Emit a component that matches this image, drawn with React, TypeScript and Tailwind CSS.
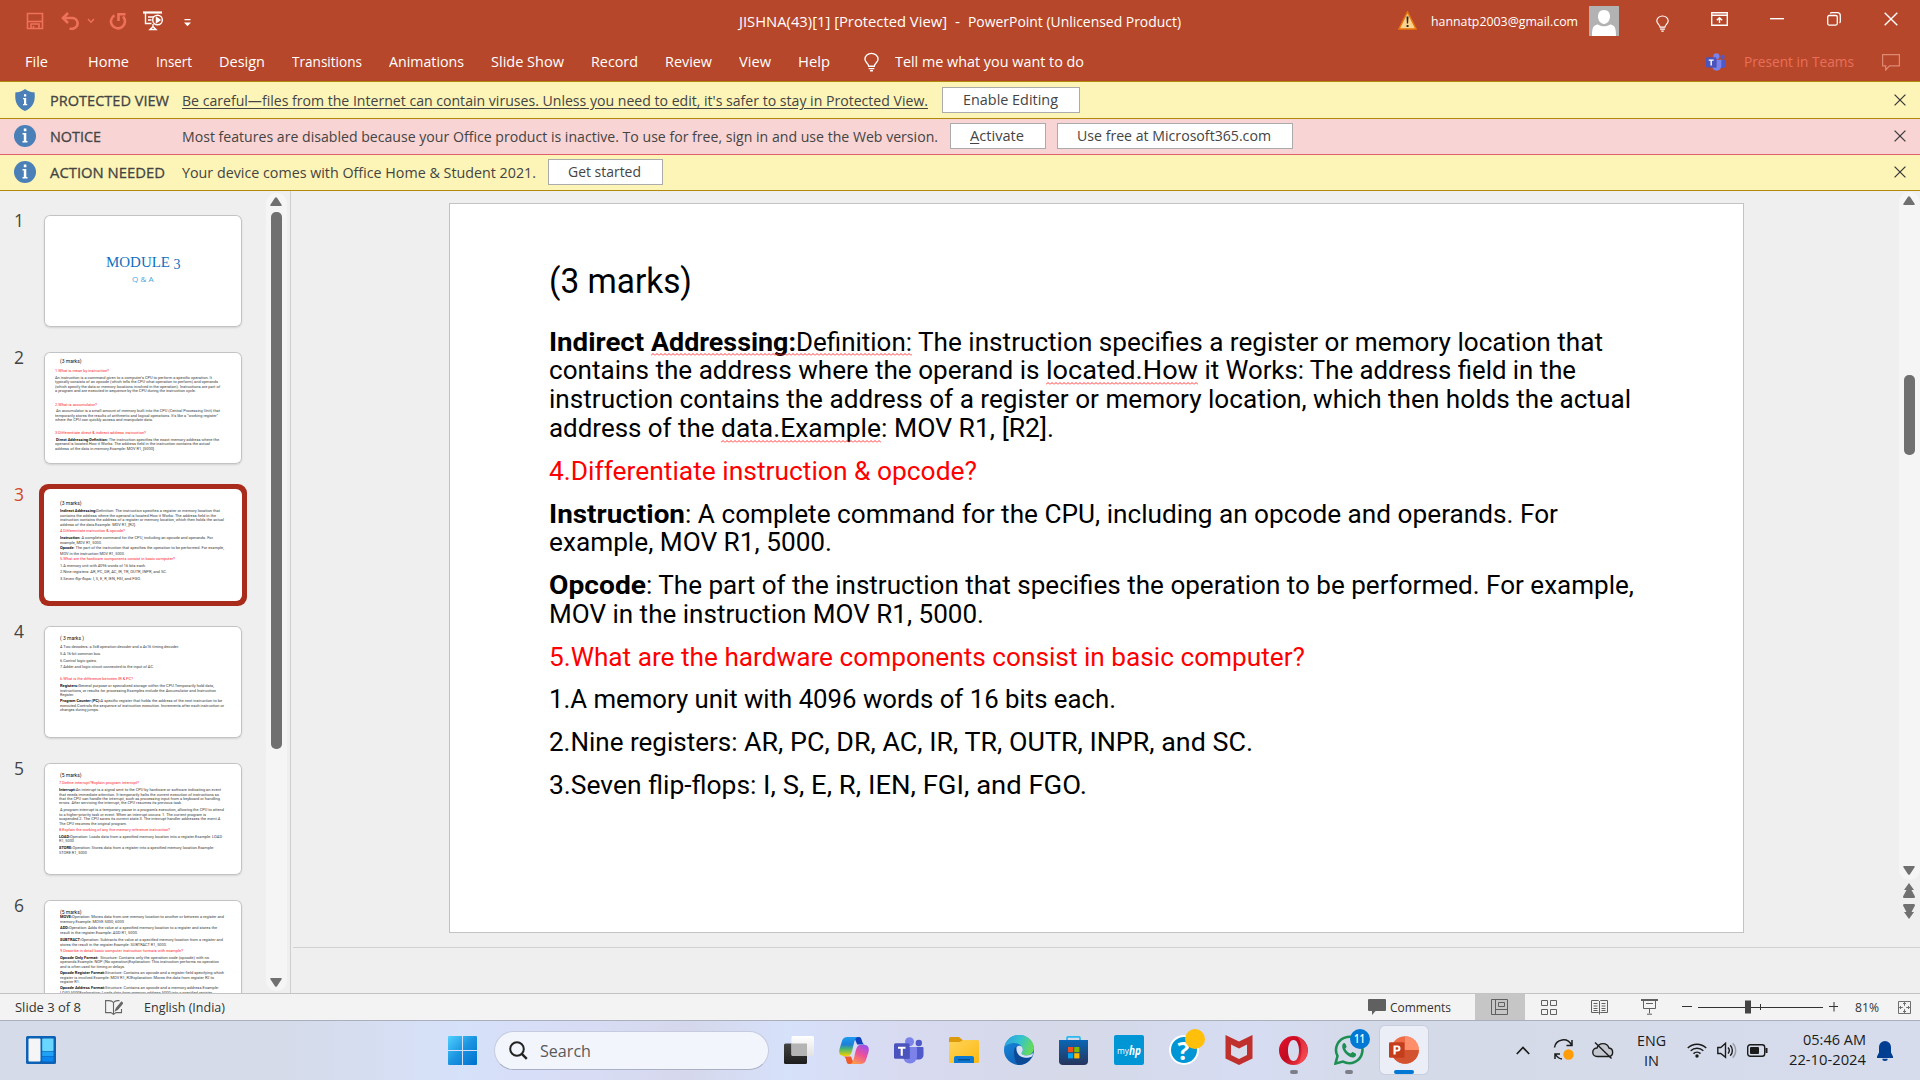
import React, { useLayoutEffect, useRef, useState } from "react";

/* Text set to an exact advance width, so that it keeps its place in its row. */
function Fit({ w, children, className = "" }: { w: number; children: React.ReactNode; className?: string }) {
  const ref = useRef<HTMLSpanElement>(null);
  const [scale, setScale] = useState(1);
  useLayoutEffect(() => {
    const el = ref.current;
    if (!el) return;
    const old = el.style.transform;
    el.style.transform = "none";
    const natural = el.getBoundingClientRect().width;
    el.style.transform = old;
    if (natural > 0) setScale(w / natural);
  }, [w, children]);
  return (
    <span className={"inline-block shrink-0 whitespace-pre " + className} style={{ width: w }}>
      <span ref={ref} className="inline-block origin-left whitespace-pre" style={{ transform: `scaleX(${scale})` }}>
        {children}
      </span>
    </span>
  );
}

/* ---------- title bar ---------- */

function QuickAccess() {
  return (
    <div className="flex h-[42px] items-center text-[#ee7159]">
      <svg className="ml-[26px]" width="18" height="18" viewBox="0 0 18 18" fill="none" stroke="currentColor" strokeWidth="1.6">
        <path d="M1.5 1.5h15v15h-15z" />
        <path d="M1.5 9.5h15" />
        <path d="M5 16.5v-4.5h8v4.5" />
        <path d="M7.5 14v2.5" />
      </svg>
      <svg className="ml-[16px]" width="20" height="18" viewBox="0 0 20 18" fill="none" stroke="currentColor" strokeWidth="2.6">
        <path d="M2.5 6h9a5.300 5.300 0 0 1 1.500 10.600l-3.500 0.400" />
        <path d="M8 1L3 6l5 5" />
      </svg>
      <svg className="ml-[7px]" width="8" height="6" viewBox="0 0 8 6" fill="none" stroke="currentColor" strokeWidth="1.4">
        <path d="M1 1l3 3.200L7 1" />
      </svg>
      <svg className="ml-[14px]" width="18" height="18" viewBox="0 0 18 18" fill="none" stroke="currentColor" strokeWidth="2.6">
        <path d="M5.500 3.300A7 7 0 1 0 14 4.500" />
        <path d="M9.500 9V2.300h7" />
      </svg>
      <svg className="ml-[15px] text-white" width="22" height="20" viewBox="0 0 22 20" fill="none" stroke="currentColor" strokeWidth="1.400">
        <path d="M1 1.500h19" strokeWidth="2.200" />
        <path d="M3.500 2v10.500h6M6 6h6M6 9h3.500" />
        <circle cx="15.500" cy="9" r="4.800" />
        <path d="M14.500 6.500v5l3.500-2.500z" fill="currentColor" />
        <path d="M11 13v2.500M8 18.500l3-3 3 3z" />
      </svg>
      <svg className="ml-[20px] mt-[3px] text-white" width="7" height="8" viewBox="0 0 7 8" fill="currentColor">
        <path d="M0.500 0h6v1.300h-6zM0 3.500h7L3.500 7.200z" />
      </svg>
    </div>
  );
}

function Bulb({ w, h }: { w: number; h: number }) {
  return (
    <svg width={w} height={h} viewBox="0 0 16 20" fill="none" stroke="#fff" strokeWidth="1.400">
      <path d="M5 14.500c0-3-4-4-4-7.500a7 6.300 0 0 1 14 0c0 3.500-4 4.500-4 7.500z" />
      <path d="M5 17h6M6.500 19.300h3" />
    </svg>
  );
}

function TitleBar() {
  return (
    <div className="flex h-[42px]">
      <div className="w-[739px]">
        <QuickAccess />
      </div>
      <div className="flex w-[663px] items-center pt-[2px] text-[14px] text-white">
        <Fit w={208}>JISHNA(43)[1] [Protected View]</Fit>
        <Fit w={5} className="ml-[8px]">-</Fit>
        <Fit w={213} className="ml-[8px]">PowerPoint (Unlicensed Product)</Fit>
      </div>
      <div className="flex h-[42px] items-start text-[13.500px] text-white">
        <svg className="-ml-[4px] mt-[11px]" width="19" height="19" viewBox="0 0 19 19">
          <path d="M9.500 1L18 18H1z" fill="#fcd38a" stroke="#e8760f" strokeWidth="1.500" />
          <path d="M8.500 5.500h2l-.4 7h-1.200zM8.600 14h1.900v2H8.600z" fill="#222" />
        </svg>
        <Fit w={147} className="ml-[14px] mt-[11px]">hannatp2003@gmail.com</Fit>
        <svg className="ml-[11px] mt-[6px]" width="30" height="30" viewBox="0 0 30 30">
          <rect width="30" height="30" fill="#b2b2b2" />
          <path d="M15 4c4 0 6 2.800 6 6.500S18.500 18 15 18s-6-3.800-6-7.500S11 4 15 4zM3 30c0-8 1-11 6-11.500 1.500 1 3.500 1.800 6 1.800s4.500-.8 6-1.800c5 .5 6 3.500 6 11.500z" fill="#fff" />
        </svg>
        <div className="ml-[37px] mt-[15px]"><Bulb w={13} h={17} /></div>
        <svg className="ml-[42px] mt-[12px]" width="17" height="14" viewBox="0 0 17 14" fill="none" stroke="#fff" strokeWidth="1.400">
          <path d="M.7.700h15.600v12.600H.7zM.7 3.300h15.600M8.500 11V6M5.800 8.300l2.700-2.600 2.700 2.600" />
        </svg>
        <svg className="ml-[42px] mt-[18px]" width="14" height="2" viewBox="0 0 14 2"><path d="M0 0h14v1.400H0z" fill="#fff" /></svg>
        <svg className="ml-[43px] mt-[12px]" width="14" height="14" viewBox="0 0 14 14" fill="none" stroke="#fff" strokeWidth="1.300">
          <rect x=".7" y="3.500" width="9.600" height="9.600" rx="1.500" />
          <path d="M3.300 1.500q.3-.8 1.500-.8h5.500q3 0 3 3v5.500q0 1.300-.8 1.600" />
        </svg>
        <svg className="ml-[43px] mt-[12px]" width="14" height="14" viewBox="0 0 14 14" stroke="#fff" strokeWidth="1.400"><path d="M.7.700l12.600 12.600M13.300.7L.7 13.300" /></svg>
      </div>
    </div>
  );
}

function TeamsIcon({ w, h }: { w: number; h: number }) {
  return (
    <svg width={w} height={h} viewBox="0 0 30 27">
      <circle cx="24.800" cy="6" r="3.200" fill="#5059c9" />
      <path d="M21 10h7.500q1 0 1 1v7a4.500 4.500 0 0 1-4.500 4.500h-4z" fill="#5059c9" />
      <circle cx="15.500" cy="4.700" r="4.500" fill="#7b83eb" />
      <path d="M9.500 10h12.500q1 0 1 1v8.500a7 7 0 0 1-14 0z" fill="#7b83eb" />
      <path d="M10 10h6v12h-6z" fill="#3f479e" opacity=".5" />
      <rect x="0" y="6.200" width="15.500" height="15.500" rx="1.500" fill="#4b53bc" />
      <path d="M4 9.800h7.500v2H8.800v7H6.700v-7H4z" fill="#fff" />
    </svg>
  );
}

const tabs: [string, string, number][] = [
  ["File", "ml-[25px]", 23],
  ["Home", "ml-[40px]", 41],
  ["Insert", "ml-[27px]", 36],
  ["Design", "ml-[27px]", 46],
  ["Transitions", "ml-[27px]", 70],
  ["Animations", "ml-[27px]", 75],
  ["Slide Show", "ml-[27px]", 73],
  ["Record", "ml-[27px]", 47],
  ["Review", "ml-[27px]", 47],
  ["View", "ml-[27px]", 32],
  ["Help", "ml-[27px]", 32],
];

function TabRow() {
  return (
    <div className="flex h-[39px] items-center text-[14.500px] text-white">
      {tabs.map(([t, m, w]) => (
        <Fit key={t} w={w} className={m}>{t}</Fit>
      ))}
      <div className="ml-[34px] pt-[1px]"><Bulb w={15} h={20} /></div>
      <Fit w={189} className="ml-[16px]">Tell me what you want to do</Fit>
      <div className="ml-auto flex items-center pr-[20px] text-[#e8705a]">
        <TeamsIcon w={20} h={18} />
        <Fit w={110} className="ml-[18px]">Present in Teams</Fit>
        <svg className="ml-[28px] mt-[2px]" width="18" height="17" viewBox="0 0 18 17" fill="none" stroke="#dd8a75" strokeWidth="1.200">
          <path d="M.6.600h16.800v11.200H7.500L3.700 16v-4.200H.6z" />
        </svg>
      </div>
    </div>
  );
}

/* ---------- message bars ---------- */

function CloseX() {
  return (
    <svg className="-mt-px ml-auto mr-[14px]" width="12" height="12" viewBox="0 0 12 12" stroke="#3b3b3b" strokeWidth="1.300">
      <path d="M.6.600l10.800 10.800M11.400.6L.6 11.400" />
    </svg>
  );
}

function InfoDot() {
  return (
    <svg className="-mt-px ml-[14px]" width="22" height="22" viewBox="0 0 22 22">
      <circle cx="11" cy="11" r="11" fill="#4a7fb8" />
      <path d="M9.800 3.500h2.600v2.800H9.800zM8.500 8h3.800v8h1.200v1.500h-5V16h1.300V9.500H8.500z" fill="#fff" />
    </svg>
  );
}

function ShieldDot() {
  return (
    <svg className="ml-[15px] mr-px" width="20" height="22" viewBox="0 0 20 22">
      <path d="M10 0c3 2.500 6 3.300 9.500 3.300C20.500 11 19 18 10 22 1 18-.5 11 .5 3.300 4 3.300 7 2.500 10 0z" fill="#4a7fb8" />
      <path d="M9 5.300h2.200v2.200H9zM8 9h3.200v6h1v1.300H8V15h1v-4.700H8z" fill="#fff" />
    </svg>
  );
}

function BarButton({ className, w, children }: { className: string; w: number; children: React.ReactNode }) {
  return (
    <div className={"flex h-[26px] items-center justify-center border border-[#ababab] bg-white pr-[2px] " + className}>
      <Fit w={w}>{children}</Fit>
    </div>
  );
}

function MessageBars() {
  return (
    <div className="text-[14.500px] text-[#444]">
      <div className="flex h-[37px] items-center border-b border-[#b08a0a] bg-[#fcf5b7]">
        <ShieldDot />
        <Fit w={119} className="ml-[14px] pt-px [-webkit-text-stroke:0.300px]">PROTECTED VIEW</Fit>
        <Fit w={746} className="ml-[13px] pt-px"><span className="underline underline-offset-2">Be careful—files from the Internet can contain viruses. Unless you need to edit, it's safer to stay in Protected View.</span></Fit>
        <BarButton className="ml-[14px] w-[138px]" w={95}>Enable Editing</BarButton>
        <CloseX />
      </div>
      <div className="flex h-[36px] items-center border-b border-[#e0606a] bg-[#f8d4d4]">
        <InfoDot />
        <Fit w={51} className="ml-[14px] [-webkit-text-stroke:0.300px]">NOTICE</Fit>
        <Fit w={756} className="ml-[81px]">Most features are disabled because your Office product is inactive. To use for free, sign in and use the Web version.</Fit>
        <BarButton className="-mt-px ml-[12px] w-[96px]" w={54}><span className="underline underline-offset-2">A</span>ctivate</BarButton>
        <BarButton className="-mt-px ml-[11px] w-[236px]" w={194}>Use free at Microsoft365.com</BarButton>
        <CloseX />
      </div>
      <div className="flex h-[36px] items-center border-b border-[#b08a0a] bg-[#fcf5b7]">
        <InfoDot />
        <Fit w={115} className="ml-[14px] [-webkit-text-stroke:0.300px]">ACTION NEEDED</Fit>
        <Fit w={354} className="ml-[17px]">Your device comes with Office Home &amp; Student 2021.</Fit>
        <BarButton className="-mt-px ml-[12px] w-[115px]" w={73}>Get started</BarButton>
        <CloseX />
      </div>
    </div>
  );
}

/* ---------- thumbnails ---------- */

type Line = { y: number; w: number; t: string; b?: string; red?: boolean; title?: boolean };

const slide2: Line[] = [
  { y: 8.5, w: 21.5, t: "(3 marks)", title: true },
  { y: 17.8, w: 54, t: "1.What is mean by instruction?", red: true },
  { y: 24.8, w: 157, t: "An instruction is a command given to a computer's CPU to perform a specific operation. It" },
  { y: 29.3, w: 163, t: "typically consists of an opcode (which tells the CPU what operation to perform) and operands" },
  { y: 34, w: 165, t: "(which specify the data or memory locations involved in the operation). Instructions are part of" },
  { y: 38.5, w: 141, t: "a program and are executed in sequence by the CPU during the instruction cycle." },
  { y: 52, w: 42, t: "2.What is accumulator?", red: true },
  { y: 58, w: 165, t: " An accumulator is a small amount of memory built into the CPU (Central Processing Unit) that" },
  { y: 63, w: 163, t: "temporarily stores the results of arithmetic and logical operations. It's like a \"working register\"" },
  { y: 67.3, w: 98, t: "where the CPU can quickly access and manipulate data." },
  { y: 80, w: 91, t: "3.Differentiate direct & indirect address instruction?", red: true },
  { y: 87, w: 164, b: " Direct Addressing:Definition:", t: " The instruction specifies the exact memory address where the" },
  { y: 91.5, w: 155, t: "operand is located.How it Works: The address field in the instruction contains the actual" },
  { y: 96, w: 99, t: "address of the data in memory.Example: MOV R1, [5000]" },
];
const slide3: Line[] = [
  { y: 13, w: 21.5, t: "(3 marks)", title: true },
  { y: 21.7, w: 160, b: "Indirect Addressing:", t: "Definition: The instruction specifies a register or memory location that" },
  { y: 26.2, w: 156, t: "contains the address where the operand is located.How it Works: The address field in the" },
  { y: 30.7, w: 164, t: "instruction contains the address of a register or memory location, which then holds the actual" },
  { y: 35.3, w: 76, t: "address of the data.Example: MOV R1, [R2]." },
  { y: 41.7, w: 65, t: "4.Differentiate instruction & opcode?", red: true },
  { y: 48.7, w: 153, b: "Instruction", t: ": A complete command for the CPU, including an opcode and operands. For" },
  { y: 53.3, w: 42, t: "example, MOV R1, 5000." },
  { y: 58.7, w: 164, b: "Opcode", t: ": The part of the instruction that specifies the operation to be performed. For example," },
  { y: 64.3, w: 65, t: "MOV in the instruction MOV R1, 5000." },
  { y: 69.7, w: 115, t: "5.What are the hardware components consist in basic computer?", red: true },
  { y: 76.7, w: 86, t: "1.A memory unit with 4096 words of 16 bits each." },
  { y: 82.7, w: 107, t: "2.Nine registers: AR, PC, DR, AC, IR, TR, OUTR, INPR, and SC." },
  { y: 89.3, w: 81, t: "3.Seven flip-flops: I, S, E, R, IEN, FGI, and FGO." },
];
const slide4: Line[] = [
  { y: 11, w: 24, t: "( 3 marks )", title: true },
  { y: 20.7, w: 119, t: "4.Two decoders: a 3x8 operation decoder and a 4x16 timing decoder." },
  { y: 27.7, w: 41, t: "5.A 16-bit common bus." },
  { y: 34.7, w: 37, t: "6.Control logic gates." },
  { y: 40.7, w: 94, t: "7.Adder and logic circuit connected to the input of AC." },
  { y: 52.7, w: 73, t: "6.What is the difference between IR & PC?", red: true },
  { y: 59.7, w: 154, b: "Registers:", t: "General purpose or specialized storage within the CPU.Temporarily hold data," },
  { y: 64.3, w: 156, t: "instructions, or results for processing.Examples include the Accumulator and Instruction" },
  { y: 68.7, w: 14, t: "Register." },
  { y: 74.7, w: 162, b: "Program Counter (PC):", t: "A specific register that holds the address of the next instruction to be" },
  { y: 79.3, w: 164, t: "executed.Controls the sequence of instruction execution. Increments after each instruction or" },
  { y: 83.7, w: 39, t: "changes during jumps." },
];
const slide5: Line[] = [
  { y: 11, w: 21.5, t: "(5 marks)", title: true },
  { y: 19.3, w: 80, t: "7.Define interrupt?Explain program interrupt?", red: true },
  { y: 26.7, w: 162, b: "Interrupt:", t: "An interrupt is a signal sent to the CPU by hardware or software indicating an event" },
  { y: 31, w: 160, t: "that needs immediate attention. It temporarily halts the current execution of instructions so" },
  { y: 35.7, w: 161, t: "that the CPU can handle the interrupt, such as processing input from a keyboard or handling" },
  { y: 39.7, w: 123, t: "errors. After servicing the interrupt, the CPU resumes its previous task." },
  { y: 46.7, w: 165, t: " A program interrupt is a temporary pause in a program's execution, allowing the CPU to attend" },
  { y: 51.3, w: 147, t: "to a higher-priority task or event. When an interrupt occurs: 1. The current program is" },
  { y: 55.7, w: 162, t: "suspended.2. The CPU saves its current state.3. The interrupt handler addresses the event.4." },
  { y: 60.3, w: 68, t: "The CPU resumes the original program." },
  { y: 66.7, w: 111, t: "8.Explain the working of any five memory reference instruction?", red: true },
  { y: 73.3, w: 163, b: "LOAD:", t: "Operation: Loads data from a specified memory location into a register.Example: LOAD" },
  { y: 77.7, w: 15, t: "R1, 5000" },
  { y: 84.5, w: 155, b: "STORE:", t: "Operation: Stores data from a register into a specified memory location.Example:" },
  { y: 88.8, w: 28, t: "STORE R1, 5000" },
];
const slide6: Line[] = [
  { y: 11, w: 21.5, t: "(5 marks)", title: true },
  { y: 16.7, w: 164, b: "MOVE:", t: "Operation: Moves data from one memory location to another or between a register and" },
  { y: 21.5, w: 64, t: "memory.Example: MOVE 5000, 6000" },
  { y: 27.7, w: 157, b: "ADD:", t: "Operation: Adds the value at a specified memory location to a register and stores the" },
  { y: 32.3, w: 78, t: "result in the register.Example: ADD R1, 5000." },
  { y: 39.5, w: 163, b: "SUBTRACT:", t: "Operation: Subtracts the value at a specified memory location from a register and" },
  { y: 43.8, w: 107, t: "stores the result in the register.Example: SUBTRACT R1, 5000." },
  { y: 50.7, w: 123, t: "9.Describe in detail basic computer instruction formats with example?", red: true },
  { y: 57, w: 149, b: "Opcode Only Format:", t: "  Structure: Contains only the operation code (opcode) with no" },
  { y: 61.7, w: 159, t: "operands.Example: NOP (No operation)Explanation: This instruction performs no operation" },
  { y: 65.9, w: 65, t: "and is often used for timing or delays." },
  { y: 72.7, w: 164, b: "Opcode Register Format:", t: "Structure: Contains an opcode and a register field specifying which" },
  { y: 77, w: 154, t: "register is involved.Example: MOV R1, R2Explanation: Moves the data from register R2 to" },
  { y: 81.7, w: 20, t: "register R1." },
  { y: 87.7, w: 159, b: "Opcode Address Format:", t: "Structure: Contains an opcode and a memory address.Example:" },
  { y: 92.3, w: 153, t: "LOAD 5000Explanation: Loads data from memory address 5000 into a specified register." },
];

const ROW = 4;

function ThumbText({ lines, indent }: { lines: Line[]; indent: string }) {
  return (
    <div className={"pt-[0.800px] font-[Roboto,sans-serif] text-[4.200px] leading-[4px] text-[#3c3c3c] " + indent}>
      {lines.map((l, i) => {
        const prev = i === 0 ? 0 : lines[i - 1].y + ROW / 2;
        return (
          <div
            key={i}
            className={"flex h-[4px] items-center " + (l.title ? "text-[5.300px] text-[#111] " : "") + (l.red ? "text-[#ff2a35]" : "")}
            style={{ marginTop: l.y - ROW / 2 - prev }}
          >
            <Fit w={l.w}>
              {l.b ? <b className="text-[#111]">{l.b}</b> : null}
              {l.t}
            </Fit>
          </div>
        );
      })}
    </div>
  );
}

function Thumb({ n, active, children }: { n: number; active?: boolean; children: React.ReactNode }) {
  return (
    <div className="flex h-[137px] shrink-0 items-start">
      <div className={"-mt-[2px] w-[39px] pl-[14px] text-[18px] leading-[24px] " + (active ? "text-[#d24726]" : "text-[#444]")}>
        <Fit w={10}>{n}</Fit>
      </div>
      <div className={active ? "rounded-[9px] bg-[#a92b1c] p-[5px]" : "p-[5px]"}>
        <div className={"h-[112px] w-[198px] overflow-hidden rounded-[6px] bg-white " + (active ? "" : "shadow-[0_0_0_1px_#c3c3c3_inset,0_1px_2px_rgba(0,0,0,0.12)]")}>
          {children}
        </div>
      </div>
    </div>
  );
}

function Tri({ down, className = "" }: { down?: boolean; className?: string }) {
  return (
    <svg className={"shrink-0 " + className} width="12" height="9" viewBox="0 0 12 9" fill="#707070">
      <path d={down ? "M1 0h10q1.200.300.600 1.200L7 8.200q-1 1-2 0L.4 1.200Q-.2.300 1 0z" : "M1 9h10q1.200-.3.600-1.200L7 .8Q6-.2 5 .8L.4 7.800Q-.2 8.700 1 9z"} />
    </svg>
  );
}

function Sidebar() {
  return (
    <div className="flex h-[802px] w-[291px] overflow-hidden border-r border-[#cfcfcf]">
      <div className="flex h-full w-[266px] flex-col overflow-hidden pt-[19px]">
        <Thumb n={1}>
          <div className="flex h-full flex-col items-center justify-start pt-[38px]">
            <div className="flex h-[18px] items-center font-['Liberation_Serif',serif] text-[15px] leading-[18px] text-[#0f6fc0]">
              <Fit w={64}>MODULE</Fit>
              <span className="ml-[4px] pt-[5px] text-[14px]">3</span>
            </div>
            <div className="pt-[3px] text-[7.500px] leading-[10px] text-[#4ea6dc]">
              <Fit w={21.5}>Q &amp; A</Fit>
            </div>
          </div>
        </Thumb>
        <Thumb n={2}><ThumbText lines={slide2} indent="pl-[10.500px] [&>div:first-child]:pl-[5.500px]" /></Thumb>
        <Thumb n={3} active><ThumbText lines={slide3} indent="pl-[16px]" /></Thumb>
        <Thumb n={4}><ThumbText lines={slide4} indent="pl-[16px]" /></Thumb>
        <Thumb n={5}><ThumbText lines={slide5} indent="pl-[15px] [&>div:first-child]:pl-[1px]" /></Thumb>
        <Thumb n={6}><ThumbText lines={slide6} indent="pl-[16px]" /></Thumb>
      </div>
      <div className="mb-[2px] mt-[2px] flex w-[21px] flex-col items-center rounded-[10px] bg-[#f5f5f5] pb-[4px] pr-px pt-[4px]">
        <Tri />
        <div className="mt-[6px] h-[537px] w-[11px] rounded-[5px] bg-[#707070]" />
        <Tri down className="mt-auto" />
      </div>
    </div>
  );
}

/* ---------- slide ---------- */

function Squiggle({ children }: { children: React.ReactNode }) {
  return (
    <span className="relative">
      {children}
      <svg className="absolute bottom-[1px] left-0 h-[3px] w-full" aria-hidden="true">
        <defs>
          <pattern id="wave" width="4" height="3" patternUnits="userSpaceOnUse">
            <path d="M0 2.500L2 .5L4 2.500" fill="none" stroke="#ff2020" strokeWidth="0.900" />
          </pattern>
        </defs>
        <rect width="100%" height="3" fill="url(#wave)" />
      </svg>
    </span>
  );
}

function Slide() {
  return (
    <div className="ml-[158px] mt-[12px] h-[730px] w-[1295px] border border-[#c3c3c3] bg-white pl-[98.500px] pt-[52.500px] font-[Roboto,sans-serif] text-[25px] leading-[28.900px] text-black">
      <div className="h-[72px] text-[34.500px] leading-[48px]">
        <Fit w={143}>(3 marks)</Fit>
      </div>
      <div className="flex flex-col gap-[13.800px]">
        <div>
          <div className="flex h-[28.900px]">
            <Fit w={102} className="font-bold">Indirect </Fit>
            <Squiggle>
              <Fit w={145} className="font-bold">Addressing:</Fit>
              <Fit w={116}>Definition:</Fit>
            </Squiggle>
            <Fit w={691}> The instruction specifies a register or memory location that</Fit>
          </div>
          <div className="flex h-[28.900px]">
            <Fit w={497}>contains the address where the operand is </Fit>
            <Squiggle><Fit w={152}>located.How</Fit></Squiggle>
            <Fit w={378}> it Works: The address field in the</Fit>
          </div>
          <div className="h-[28.900px]"><Fit w={1082}>instruction contains the address of a register or memory location, which then holds the actual</Fit></div>
          <div className="flex h-[28.900px]">
            <Fit w={172}>address of the </Fit>
            <Squiggle><Fit w={160}>data.Example</Fit></Squiggle>
            <Fit w={173}>: MOV R1, [R2].</Fit>
          </div>
        </div>
        <div className="h-[28.900px] text-[#ff0000]"><Fit w={428}>4.Differentiate instruction &amp; opcode?</Fit></div>
        <div>
          <div className="flex h-[28.900px]">
            <Fit w={136} className="font-bold">Instruction</Fit>
            <Fit w={873}>: A complete command for the CPU, including an opcode and operands. For</Fit>
          </div>
          <div className="h-[28.900px]"><Fit w={283}>example, MOV R1, 5000.</Fit></div>
        </div>
        <div>
          <div className="flex h-[28.900px]">
            <Fit w={97} className="font-bold">Opcode</Fit>
            <Fit w={988}>: The part of the instruction that specifies the operation to be performed. For example,</Fit>
          </div>
          <div className="h-[28.900px]"><Fit w={435}>MOV in the instruction MOV R1, 5000.</Fit></div>
        </div>
        <div className="h-[28.900px] text-[#ff0000]"><Fit w={756}>5.What are the hardware components consist in basic computer?</Fit></div>
        <div className="h-[28.900px]"><Fit w={567}>1.A memory unit with 4096 words of 16 bits each.</Fit></div>
        <div className="flex h-[28.900px]">
          <Fit w={195}>2.Nine registers: </Fit>
          <Fit w={509}>AR, PC, DR, AC, IR, TR, OUTR, INPR, and SC.</Fit>
        </div>
        <div className="flex h-[28.900px]">
          <Fit w={214}>3.Seven flip-flops: </Fit>
          <Fit w={324}>I, S, E, R, IEN, FGI, and FGO.</Fit>
        </div>
      </div>
    </div>
  );
}

function Workspace() {
  return (
    <div className="flex h-[802px] bg-[#efefef]">
      <Sidebar />
      <div className="flex w-[1629px] flex-col pl-[2px]">
        <div className="flex h-[757px] border-b border-[#d2d2d2]">
          <div className="-ml-[2px] w-[1606px]"><Slide /></div>
          <div className="ml-[2px] flex w-[21px] flex-col items-center">
            <div className="mt-[1px] flex h-[688px] w-[21px] flex-col items-center rounded-[10px] bg-[#f5f5f5] pb-[5px] pr-px pt-[4px]">
              <Tri />
              <div className="mt-[170px] h-[80px] w-[11px] rounded-[5px] bg-[#707070]" />
              <Tri down className="mt-auto" />
            </div>
            <svg className="mr-px mt-[3px]" width="12" height="36" viewBox="0 0 12 36" fill="#707070">
              <path d="M6 0l5 7H8.500L12 13.500q0 1.500-1 1.500H1q-1 0-1-1.500L3.500 7H1z" />
              <path d="M6 36l5-7H8.500L12 22.500q0-1.500-1-1.500H1q-1 0-1 1.500L3.500 29H1z" />
            </svg>
          </div>
        </div>
      </div>
    </div>
  );
}

/* ---------- status bar ---------- */

function StatusBar() {
  return (
    <div className="flex h-[28px] items-center border-y border-b-[#a9afbd] border-t-[#c3c3c3] bg-[#f3f3f3] text-[13px] text-[#333]">
      <Fit w={66} className="ml-[15px]">Slide 3 of 8</Fit>
      <svg className="ml-[24px]" width="18" height="15" viewBox="0 0 18 15" fill="none" stroke="#666" strokeWidth="1.100">
        <path d="M8.500 14V2.500Q7 .6 4 .6H.6v12H6l2.500 1.800 2.500-1.800h5.500V9M8.500 2.500Q10 .6 12.500.6h2" />
        <path d="M10.500 10.500l1-2.500L16.500 2l1.200 1.200-5 6z" fill="#666" />
      </svg>
      <Fit w={81} className="ml-[21px]">English (India)</Fit>
      <svg className="ml-[1143px]" width="18" height="16" viewBox="0 0 18 16" fill="#606060"><path d="M1 0h16q1 0 1 1v10q0 1-1 1H7.500L4 16v-4H1q-1 0-1-1V1q0-1 1-1z" /></svg>
      <Fit w={61} className="ml-[4px]">Comments</Fit>
      <div className="ml-[24px] flex h-[26px] w-[50px] items-center justify-center bg-[#c6c6c6] pr-px">
        <svg width="17" height="16" viewBox="0 0 17 16" fill="none" stroke="#606060"><path d="M.5.500h16v15H.5zM4.500.5v15M4.500 10.500h12M7.500 3.500h6v4h-6z" /></svg>
      </div>
      <div className="flex w-[50px] justify-center pr-[2px]">
        <svg width="16" height="15" viewBox="0 0 16 15" fill="none" stroke="#606060"><path d="M.5.500h6v5h-6zM9.500.5h6v5h-6zM.5 9.500h6v5h-6zM9.500 9.500h6v5h-6z" /></svg>
      </div>
      <div className="flex w-[50px] justify-center pr-px">
        <svg width="17" height="16" viewBox="0 0 17 16" fill="none" stroke="#606060"><path d="M.5 1.500h7l1 1 1-1h7v12h-7l-1 1-1-1h-7zM8.500 2v13.500M2.500 4.500h4M2.500 7h4M2.500 9.500h4M10.500 4.500h4M10.500 7h4M10.500 9.500h4M2.500 11.500h4M10.500 11.500h4" /></svg>
      </div>
      <div className="flex w-[50px] justify-center pr-px">
        <svg width="17" height="16" viewBox="0 0 17 16" fill="none" stroke="#606060"><path d="M0 1h17" strokeWidth="2" /><path d="M2.500 1.500v8h12v-8M5 4.500h7M8.500 9.500v5M6 15.200h5" /></svg>
      </div>
      <svg className="ml-[7px]" width="156" height="16" viewBox="0 0 156 16">
        <path d="M0 7h10v1H0zM16 8h125v1H16zM78 5h1v6h-1zM147 7h10v1h-10zM151.500 3h1v9.500h-1z" fill="#333" />
        <rect x="63" y="1.500" width="6" height="13" fill="#444" />
      </svg>
      <Fit w={24} className="ml-[17px]">81%</Fit>
      <svg className="ml-[19px]" width="13" height="13" viewBox="0 0 13 13" fill="none" stroke="#606060"><path d="M.5.500h12v12H.5zM6.500 1.500v3.300M5 3l1.500-1.500L8 3M6.500 11.500V8.200M5 10l1.500 1.500L8 10M1.500 6.500h3.300M3 5L1.500 6.500 3 8M11.500 6.500H8.200M10 5l1.500 1.500L10 8" strokeWidth=".9" /></svg>
    </div>
  );
}

/* ---------- taskbar ---------- */

function Cell({ children, running, active }: { children: React.ReactNode; running?: boolean; active?: boolean }) {
  return (
    <div className="flex w-[55px] justify-center">
      <div className={"relative flex h-[48px] w-[48px] items-center justify-center rounded-[5px] " + (active ? "bg-[#eceef7] shadow-[0_0_0_1px_rgba(150,155,185,0.18)]" : "")}>
        {children}
        {running && <div className="absolute bottom-0 left-[20px] h-[4px] w-[8px] rounded-full bg-[#7c7f88]" />}
        {active && <div className="absolute bottom-0 left-[14px] h-[4px] w-[20px] rounded-full bg-[#0078d4]" />}
      </div>
    </div>
  );
}

function Apps() {
  return (
    <div className="flex">
      <Cell>
        <svg width="30" height="28" viewBox="0 0 30 28">
          <defs>
            <linearGradient id="tvd" x1="0" y1="0" x2="0" y2="1"><stop offset="0" stopColor="#444" /><stop offset="1" stopColor="#1c1c1c" /></linearGradient>
            <linearGradient id="tvl" x1="0" y1="0" x2="0" y2="1"><stop offset="0" stopColor="#fff" /><stop offset="1" stopColor="#e2e2e2" /></linearGradient>
          </defs>
          <rect x="0" y="7.500" width="23" height="20.500" rx="1.500" fill="url(#tvd)" />
          <rect x="7.500" y="0" width="22.500" height="20" rx="1.500" fill="url(#tvl)" />
          <path d="M7.500 7.500H23V20H9q-1.500 0-1.500-1.500z" fill="#b4b4b4" />
        </svg>
      </Cell>
      <Cell>
        <svg width="30" height="27" viewBox="0 0 30 27">
          <defs>
            <linearGradient id="cpa" x1="0" y1="0" x2="0" y2="1"><stop offset="0" stopColor="#1b9df0" /><stop offset=".4" stopColor="#1d7fd8" /><stop offset=".65" stopColor="#52b86a" /><stop offset="1" stopColor="#f5d000" /></linearGradient>
            <linearGradient id="cpb" x1=".8" y1="0" x2=".3" y2="1"><stop offset="0" stopColor="#9b4fee" /><stop offset=".5" stopColor="#ee5199" /><stop offset="1" stopColor="#fb9a4d" /></linearGradient>
          </defs>
          <path d="M15 0h5c2 0 2.500 2 3.200 4.500.5 2 1.500 3 3 3h-8z" fill="#1342c0" />
          <path d="M15 27h-5c-2 0-2.500-2-3-4.500-.4-2-1.500-3-3-3h8z" fill="#f05a2a" />
          <path d="M8.500 0h10c-2.300 1-3 4-4 8-1.200 5-2 11-5.500 11H4.500C0 19-.5 15 .8 11L3 4C3.800 1.300 5.500 0 8.500 0z" fill="url(#cpa)" />
          <path d="M21.500 27h-10c2.300-1 3-4 4-8 1.200-5 2-11 5.500-11h4.500C30 8 30.500 12 29.200 16L27 23c-.8 2.700-2.500 4-5.500 4z" fill="url(#cpb)" />
        </svg>
      </Cell>
      <Cell><TeamsIcon w={30} h={27} /></Cell>
      <Cell>
        <svg width="30" height="26" viewBox="0 0 30 26">
          <defs><linearGradient id="fo" x1="0" y1="0" x2="1" y2="1"><stop offset="0" stopColor="#ffd45a" /><stop offset="1" stopColor="#fbb912" /></linearGradient></defs>
          <path d="M1.500 0H10l3.500 3H28q1.500 0 1.500 1.500V12H0V1.500Q0 0 1.500 0z" fill="#dd9a0a" />
          <path d="M0 5h11l3-2h14.500q1.500 0 1.500 1.500v20q0 1.500-1.500 1.500h-27Q0 26 0 24.500z" fill="url(#fo)" />
          <path d="M5 26v-5q0-2 2-2h16q2 0 2 2v5z" fill="#0c79d1" />
          <path d="M9 22h12v1.500H9z" fill="#0a4e94" />
        </svg>
      </Cell>
      <Cell>
        <svg width="30" height="30" viewBox="0 0 30 30">
          <defs>
            <linearGradient id="e1" x1="0" y1="0" x2="1" y2=".3"><stop offset="0" stopColor="#2a9ce0" /><stop offset=".55" stopColor="#34c3d0" /><stop offset="1" stopColor="#63d961" /></linearGradient>
            <linearGradient id="e2" x1="0" y1="0" x2=".6" y2="1"><stop offset="0" stopColor="#1a8fe0" /><stop offset="1" stopColor="#0e5cb5" /></linearGradient>
          </defs>
          <circle cx="15" cy="15" r="15" fill="url(#e2)" />
          <path d="M.3 12.500C1.500 5 7.500 0 15 0c9 0 15 6.500 15 13 0 4.500-3.500 7.500-7.500 7.500-3.500 0-5-1.200-5-2.200 0-.8 1.300-1.300 1.300-3.800 0-3.500-3.800-6.500-8.500-6.500-5 0-9 2.500-10 4.500z" fill="url(#e1)" />
          <path d="M10 16.500c0-2 1-4 3-5.200-1 5.200 2.500 11.500 9 11.500 2 0 4-.5 6-1.800C25.500 27 20 30 15.500 30 11 29 10 21 10 16.500z" fill="#0d4a95" />
          <path d="M12.600 12c1-1 2-1.400 3.200-1.300 2 .2 3 2 3 3.800 0 2.500-1.300 3-1.300 3.800 0 1 1.500 2.200 5 2.200 2.500 0 5-1 6.800-2.800-.2 1.500-.6 2.700-1.300 3.800-2 1-4 1.300-6 1.300-6.500 0-10.400-5-9.400-10.800z" fill="#d9e2f3" />
        </svg>
      </Cell>
      <Cell>
        <svg width="29" height="29" viewBox="0 0 29 29">
          <defs><linearGradient id="st" x1="0" y1="0" x2="0" y2="1"><stop offset="0" stopColor="#0a66b5" /><stop offset="1" stopColor="#27345c" /></linearGradient></defs>
          <path d="M8 5V2q0-1.200 1.200-1.200h10.600Q21 .8 21 2v3" fill="none" stroke="#2cb9ef" strokeWidth="1.700" />
          <path d="M0 4h29v21q0 4-4 4H4q-4 0-4-4z" fill="url(#st)" />
          <path d="M9 11h5.200v5.200H9z" fill="#f25022" /><path d="M15.200 11h5.200v5.200h-5.200z" fill="#7fba00" /><path d="M9 17.200h5.200v5.200H9z" fill="#00a4ef" /><path d="M15.200 17.200h5.200v5.200h-5.200z" fill="#ffb900" />
        </svg>
      </Cell>
      <Cell>
        <div className="flex h-[30px] w-[30px] items-center justify-center rounded-[2px] bg-[#0096d6] text-white">
          <Fit w={12} className="text-[9px] leading-none">my</Fit><Fit w={12} className="text-[13px] font-bold italic leading-none">hp</Fit>
        </div>
      </Cell>
      <Cell>
        <div className="flex h-[30px] w-[30px] items-center justify-center rounded-full border-2 border-white bg-[#0096d6] text-[25px] font-bold leading-none text-white">?</div>
        <div className="absolute right-[3px] top-[3px] h-[20px] w-[20px] rounded-full bg-[#ffbf0a]" />
      </Cell>
      <Cell>
        <svg width="28" height="30" viewBox="0 0 28 30">
          <path d="M.5 0L14 6.500 27.500 0v23.500L14 30 .5 23.500z" fill="#c0302c" />
          <path d="M6 9.500l8 4 8-4v10.500l-8 4-8-4z" fill="#d9dcea" />
        </svg>
      </Cell>
      <Cell running>
        <svg width="29" height="29" viewBox="0 0 29 29">
          <defs><linearGradient id="op" x1="0" y1="0" x2="1" y2="1"><stop offset="0" stopColor="#e8122c" /><stop offset=".5" stopColor="#c00a20" /><stop offset="1" stopColor="#ff4b50" /></linearGradient></defs>
          <path fillRule="evenodd" d="M14.500 0a14.500 14.500 0 1 1 0 29 14.500 14.500 0 0 1 0-29zm0 4c-3.500 0-5.500 5-5.500 10.500S11 25 14.500 25 20 20 20 14.500 18 4 14.500 4z" fill="url(#op)" />
          <path d="M17 .3a14.500 14.500 0 0 1 0 28.400c3-1 5.500-7 5.500-14.200S20 1.300 17 .3z" fill="#ff5a5f" opacity=".5" />
        </svg>
      </Cell>
      <Cell running>
        <svg width="30" height="30" viewBox="0 0 30 30">
          <path d="M1.500 28.500l2-7.500A13.200 13.200 0 1 1 9 26.600z" fill="none" stroke="#1d8f52" strokeWidth="2.600" />
          <path d="M8.500 9.500c1-2 2.300-2 3-.5l1 2.300c.4.900-1.200 2-1.200 2.500 1 2.200 3 4 5.200 4.800.7 0 1.500-1.800 2.300-1.500l2.800 1.300c1 .6.500 2.800-1 3.600-2 1.200-5 .3-8-2.500-3-2.700-5.200-6.500-4.100-10z" fill="#1d8f52" />
        </svg>
        <div className="absolute right-[3px] top-[3px] flex h-[20px] w-[20px] items-center justify-center rounded-full bg-[#0078d4] text-[12.500px] font-semibold leading-none text-white">
          <Fit w={11}>11</Fit>
        </div>
      </Cell>
      <Cell active>
        <svg width="30" height="28" viewBox="0 0 30 28">
          <circle cx="16" cy="14" r="13.800" fill="#ed6c47" />
          <path d="M16 .2A13.800 13.800 0 0 1 29.800 14H16z" fill="#ff8f6b" />
          <path d="M2.200 14h27.600A13.800 13.800 0 0 1 2.200 14z" fill="#d35230" />
          <rect x="0" y="6.200" width="15.500" height="15.500" rx="1.300" fill="#c43e1c" />
          <path d="M4.500 9.500h4a3 3 0 0 1 0 6H6.700v3H4.500zm2.200 1.800v2.400h1.500a1.200 1.200 0 0 0 0-2.400z" fill="#fff" />
        </svg>
      </Cell>
    </div>
  );
}

function Tray() {
  return (
    <div className="flex items-center text-[14.500px] leading-[20px] text-[#1b1b1b]">
      <svg width="14" height="9" viewBox="0 0 14 9" fill="none" stroke="#1b1b1b" strokeWidth="1.700"><path d="M.8 8L7 1.500 13.200 8" /></svg>
      <svg className="ml-[23px]" width="22" height="22" viewBox="0 0 22 22" fill="none" stroke="#1b1b1b" strokeWidth="1.500">
        <path d="M1.500 8.500A9 9 0 0 1 18.500 6M19 1v5.500h-5.500M2 20v-5h5M2.500 15.500A9 9 0 0 0 9 20" />
        <circle cx="15.500" cy="15.500" r="5.200" fill="#ff9c0a" stroke="none" />
      </svg>
      <svg className="ml-[17px]" width="22" height="18" viewBox="0 0 22 18" fill="none" stroke="#1b1b1b" strokeWidth="1.400">
        <path d="M5 15.500a4 4 0 0 1 0-8.500 6.300 6.300 0 0 1 12 0 4.300 4.300 0 0 1 0 8.500z" fill="#c4c7cf" />
        <path d="M3 1.500l16.500 16" />
      </svg>
      <div className="ml-[22px] flex w-[30px] flex-col items-center pt-[2px]">
        <Fit w={29}>ENG</Fit>
        <Fit w={15}>IN</Fit>
      </div>
      <svg className="ml-[21px]" width="20" height="16" viewBox="0 0 20 16" fill="none" stroke="#1b1b1b" strokeWidth="1.500">
        <path d="M.8 6a13 13 0 0 1 18.400 0M3.700 8.800a9 9 0 0 1 12.600 0M6.500 11.600a5 5 0 0 1 7 0" /><circle cx="10" cy="14" r="1.700" fill="#1b1b1b" stroke="none" />
      </svg>
      <svg className="ml-[10px]" width="20" height="17" viewBox="0 0 20 17" fill="none" stroke="#1b1b1b" strokeWidth="1.400">
        <path d="M.8 5.500h3L8.500 1.300v14L3.800 11.500h-3z" /><path d="M11 5.500a4.500 4.500 0 0 1 0 6M13.200 3.200a7.500 7.500 0 0 1 0 10.600" /><path d="M15.700 1.200a10.500 10.500 0 0 1 0 14.600" stroke="#9a9da6" />
      </svg>
      <svg className="ml-[10px]" width="21" height="13" viewBox="0 0 21 13" fill="none" stroke="#1b1b1b" strokeWidth="1.400">
        <rect x=".7" y=".7" width="17" height="11.600" rx="2.500" /><rect x="3" y="3" width="9" height="7" rx="1" fill="#1b1b1b" stroke="none" /><path d="M19.500 4v5" strokeWidth="2" />
      </svg>
      <div className="ml-[20px] flex w-[78px] flex-col items-end">
        <Fit w={63}>05:46 AM</Fit>
        <Fit w={77}>22-10-2024</Fit>
      </div>
      <svg className="ml-[11px] mr-[27px] mt-[2px]" width="16" height="20" viewBox="0 0 16 20" fill="#003e92">
        <path d="M8 0a6 6 0 0 1 6 6v5.500l2 4V17H0v-1.500l2-4V6a6 6 0 0 1 6-6zM5.300 17.800h5.400a2.700 2.200 0 0 1-5.400 0z" />
      </svg>
    </div>
  );
}

function Taskbar() {
  return (
    <div className="flex h-[59px] items-center bg-[linear-gradient(90deg,#d5dbe8_0%,#d5dbe9_15%,#d6e1fa_24%,#d8dcf4_31%,#d5d8ec_36%,#d6e1fa_41%,#d8daf0_47%,#d5d9e8_56%,#d6dcf2_65%,#d5dae8_72%,#d6dcec_100%)] pb-[1px]">
      <svg className="ml-[26px]" width="30" height="28" viewBox="0 0 30 28">
        <rect width="30" height="28" rx="1.500" fill="#0d62b5" />
        <rect x="2.500" y="2.500" width="12" height="23" rx="1" fill="#f5f5f5" />
        <rect x="16.200" y="2.500" width="11.300" height="12.500" rx=".8" fill="#69d6ff" />
        <rect x="16.200" y="15.500" width="11.300" height="4.500" fill="#1fa2f5" />
        <rect x="16.200" y="20.500" width="11.300" height="5" rx=".8" fill="#0a86ee" />
      </svg>
      <svg className="ml-[392px] mt-px" width="29" height="29" viewBox="0 0 29 29">
        <defs><linearGradient id="win" x1="0" y1="0" x2="1" y2="1"><stop offset="0" stopColor="#4fd0ff" /><stop offset=".5" stopColor="#1a93e0" /><stop offset="1" stopColor="#0070ce" /></linearGradient></defs>
        <path d="M1 0h13v14H0V1q0-1 1-1zM15 0h13q1 0 1 1v13H15zM0 15h14v14H1q-1 0-1-1zM15 15h14v13q0 1-1 1H15z" fill="url(#win)" />
      </svg>
      <div className="ml-[17px] flex h-[39px] w-[275px] items-center rounded-full border border-[#c6cbe0] border-b-[#aab0c6] bg-[#f3f5fd] pl-[14px]">
        <svg width="19" height="19" viewBox="0 0 19 19" fill="none" stroke="#222" strokeWidth="2"><circle cx="8" cy="8" r="6.800" /><path d="M12.800 12.800l5 5" strokeWidth="2.400" /></svg>
        <Fit w={51} className="ml-[12px] pt-px text-[16.500px] text-[#5a5a5a]">Search</Fit>
      </div>
      <div className="ml-[2px]"><Apps /></div>
      <div className="ml-auto"><Tray /></div>
    </div>
  );
}

export default function App() {
  return (
    <div className="h-[1080px] w-[1920px] overflow-hidden bg-[#efefef] font-['Open_Sans','Noto_Sans',sans-serif] leading-[20px]">
      <div className="h-[82px] border-b border-[#b08a0a] bg-[#b7472a]">
        <TitleBar />
        <TabRow />
      </div>
      <MessageBars />
      <Workspace />
      <StatusBar />
      <Taskbar />
    </div>
  );
}
